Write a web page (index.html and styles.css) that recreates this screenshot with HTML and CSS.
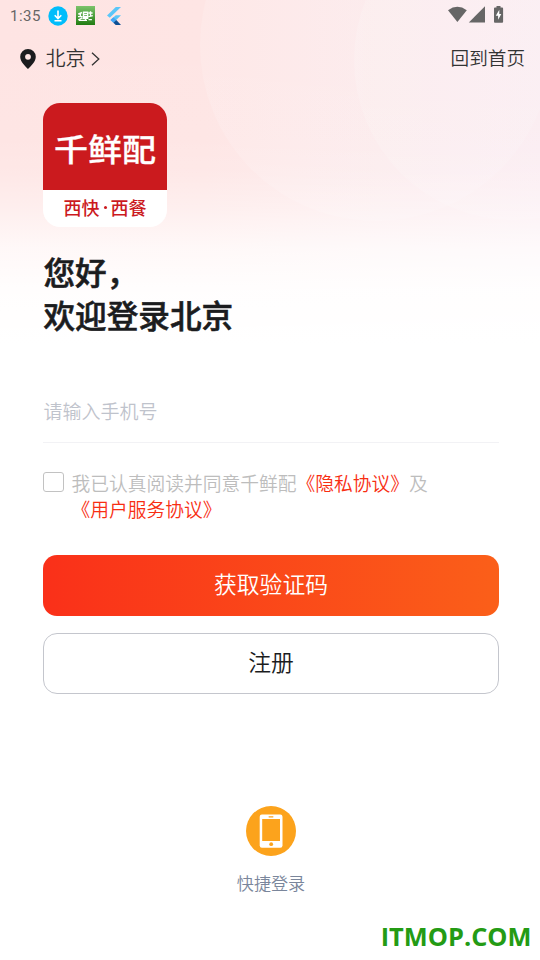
FILE: index.html
```html
<!DOCTYPE html>
<html lang="zh-CN">
<head>
<meta charset="utf-8">
<title>登录</title>
<link rel="stylesheet" href="styles.css">
</head>
<body>
<div class="screen">
  <svg class="backdrop" viewBox="0 0 540 345" aria-hidden="true">
    <defs>
      <linearGradient id="base" x1="0" x2="1" y1="0" y2="0">
        <stop offset="0" stop-color="#fee4e3"/><stop offset=".38" stop-color="#fee5e4"/><stop offset=".7" stop-color="#fce9eb"/><stop offset="1" stop-color="#fbebf0"/>
      </linearGradient>
      <linearGradient id="glow" x1="0" x2="1" y1="0" y2="0">
        <stop offset="0" stop-color="#fff" stop-opacity=".14"/><stop offset="1" stop-color="#fff" stop-opacity=".1"/>
      </linearGradient>
      <linearGradient id="fade" x1="0" x2="0" y1="0" y2="1">
        <stop offset="0" stop-color="#fff" stop-opacity="0"/><stop offset=".4" stop-color="#fff" stop-opacity=".04"/><stop offset=".5" stop-color="#fff" stop-opacity=".14"/><stop offset=".6" stop-color="#fff" stop-opacity=".38"/><stop offset=".72" stop-color="#fff" stop-opacity=".75"/><stop offset=".84" stop-color="#fff" stop-opacity=".94"/><stop offset="1" stop-color="#fff"/>
      </linearGradient>
    </defs>
    <rect width="540" height="345" fill="url(#base)"/>
    <circle cx="376" cy="45" r="176" fill="url(#glow)"/>
    <circle cx="514" cy="60" r="160" fill="url(#glow)"/>
    <rect width="540" height="345" fill="url(#fade)"/>
  </svg>

  <header class="status">
    <span class="clock">1:35</span>
    <svg class="st-down" viewBox="0 0 20 20"><circle cx="10" cy="10" r="9.7" fill="#00bdfb"/><path d="M10 4.5v7.5M6.7 9.2l3.3 3.3 3.3-3.3M6.5 14.8h7" fill="none" stroke="#fff" stroke-width="1.6"/></svg>
    <svg class="st-app" viewBox="0 0 19 19"><defs><linearGradient id="g" x2="0" y2="1"><stop stop-color="#7cc36b"/><stop offset="1" stop-color="#217c12"/></linearGradient></defs><rect width="19" height="19" fill="url(#g)"/><path d="M2.2 8.2l3.8-1.7M4.4 6.5v4.5M2 10.6h4.5M2.2 14l4-2.2M7.5 6.2h4.2v4.6H7.5zM7.5 8.5h4.2M6.6 12.3h5.8M9.5 11v3M12.6 7h4M14.5 5.3v5M12.6 10.6l4.2-1M12.5 13.6h3.4M3 14.4h8" fill="none" stroke="#fff" stroke-width="1.4"/></svg>
    <svg class="st-flutter" viewBox="0 0 14 18"><path d="M8.8 0H14L2.8 10.8 0 8.6z" fill="#5bc6f8"/><path d="M8.8 8.2H14L9.2 13l-2.8 2.8L3.5 13z" fill="#5bc6f8"/><path d="M3.5 13l2.8-2.7 3 2.7-2.9 2.8z" fill="#42a5f5"/><path d="M6.4 15.8L9.3 13l4.7 5H8.7z" fill="#0d4f94"/></svg>
    <svg class="st-right" viewBox="0 0 58 18"><g fill="#666"><path d="M0 4.2Q9.4-2.6 18.8 4.2L9.4 16z"/><path d="M20.8 16.4L37 .2v16.2z"/><path d="M46 2.4q0-.9.9-.9h1.6V0h4v1.5h1.7q.9 0 .9.9v13.4q0 .9-.9.9h-7.3q-.9 0-.9-.9z"/></g><path d="M51.3 3.8l-3.5 6h2.3v4l3.2-5.7h-2z" fill="#fff"/></svg>
  </header>

  <nav class="nav">
    <div class="place">
      <svg class="pin" viewBox="0 0 16 20"><path fill-rule="evenodd" d="M8 0a7.8 7.8 0 0 0-7.8 7.8C.2 12.8 5.5 17.5 8 20c2.5-2.5 7.8-7.2 7.8-12.2A7.8 7.8 0 0 0 8 0zm0 4.9a2.9 2.9 0 1 1 0 5.8 2.9 2.9 0 0 1 0-5.8z" fill="#1b1c1e"/></svg>
      <span>北京</span>
      <svg class="chev" viewBox="0 0 9 14"><path d="M1 .8L7.8 7 1 13.2" fill="none" stroke="#333" stroke-width="1.3"/></svg>
    </div>
    <span class="home">回到首页</span>
  </nav>

  <main class="content">
    <div class="logo">
      <div class="logo-main"><span>千鲜配</span></div>
      <div class="logo-sub"><span>西快</span><i></i><span>西餐</span></div>
    </div>
    <h1 class="hello">您好，<br>欢迎登录北京</h1>
    <div class="phone">请输入手机号</div>
    <div class="terms">
      <span class="box"></span>
      <p>我已认真阅读并同意千鲜配<a>《隐私协议》</a>及<br><a>《用户服务协议》</a></p>
    </div>
    <div class="btn primary">获取验证码</div>
    <div class="btn outline">注册</div>
  </main>

  <section class="quick">
    <svg viewBox="0 0 50 50"><circle cx="25" cy="25" r="25" fill="#fca31c"/><rect x="13.7" y="8.5" width="22.8" height="33.3" rx="2.2" fill="#fff"/><rect x="16.2" y="13" width="17.8" height="22" fill="#fca31c"/><rect x="22.5" y="10.2" width="5" height="1.2" rx=".6" fill="#fca31c"/><circle cx="25.2" cy="38.2" r="1.9" fill="#fca31c"/></svg>
    <span>快捷登录</span>
  </section>
  <div class="site">ITMOP.COM</div>
</div>
</body>
</html>
```
FILE: styles.css
```css
* { box-sizing: border-box; }
body {
  margin: 0;
  background: #fff;
  font-family: "Noto Sans CJK SC", sans-serif;
  font-weight: 350;
}
.screen {
  position: relative;
  width: 540px;
  height: 960px;
  overflow: hidden;
  display: flex;
  flex-direction: column;
}
.screen svg { display: block; flex: none; }
.backdrop { position: absolute; top: 0; left: 0; width: 540px; height: 345px; z-index: -1; }

.status { height: 32px; display: flex; align-items: center; padding: 0 34px 0 10px; }
.clock { width: 38px; font: 400 15px/20px Roboto, sans-serif; letter-spacing: .5px; color: #666; }
.st-down { width: 20px; height: 20px; margin-top: -1px; }
.st-app { width: 19px; height: 19px; margin: -1px 0 0 8px; }
.st-flutter { width: 14px; height: 18px; margin: -1px 0 0 12px; }
.st-right { width: 58px; height: 18px; margin: -2px 0 0 auto; }

.nav {
  height: 52px;
  padding: 0 15px 0 20px;
  display: flex;
  justify-content: space-between;
  align-items: center;
  color: #333;
  line-height: 30px;
}
.place { display: flex; align-items: center; font-size: 20px; }
.pin { width: 16px; height: 20px; margin: 2px 9.5px 0 0; }
.chev { width: 9px; height: 14px; margin: 1px 0 0 5.5px; }
.home { margin-bottom: 3px; font-size: 18.6px; }

.content { padding: 19px 41px 0 43px; }
.logo {
  width: 124px;
  height: 124px;
  border-radius: 17px;
  overflow: hidden;
  background: #fff;
  text-align: center;
}
.logo-main {
  height: 87px;
  padding-top: 23px;
  background: #cb1a1e;
  color: #fff;
  font-size: 34px;
  font-weight: 500;
  line-height: 43px;
  -webkit-text-stroke: .3px #fff;
}
.logo-main span { display: inline-block; transform: scaleY(.9); }
.logo-sub {
  display: flex;
  justify-content: center;
  align-items: center;
  gap: 4px;
  height: 35px;
  color: #cb1a1e;
  font-size: 18px;
  font-weight: 500;
  line-height: 35px;
}
.logo-sub i { width: 3px; height: 3px; border-radius: 50%; background: #cb1a1e; }

.hello {
  margin: 23px 0 0 .5px;
  font-size: 31.6px;
  line-height: 43px;
  font-weight: 500;
  color: #1b1c1e;
  -webkit-text-stroke: .6px #1b1c1e;
}
.phone {
  height: 61px;
  margin-top: 46px;
  padding-left: .5px;
  border-bottom: 1px solid #f2f2f5;
  font-size: 19px;
  line-height: 58px;
  color: #bfc3cc;
}
.terms { display: flex; margin-top: 27px; }
.box { width: 21px; height: 20px; margin: 2px 7.5px 0 0; border: 1px solid #c2c2c2; border-radius: 3px; }
.terms p { margin: 0; font-size: 18.75px; line-height: 26px; white-space: nowrap; color: #bdbdbd; }
.terms a { color: #f82e12; }

.btn {
  height: 61px;
  border-radius: 14px;
  font-size: 22.8px;
  line-height: 58px;
  text-align: center;
}
.primary { margin-top: 33px; color: #fff; background: linear-gradient(90deg, #fa3019, #fb5f19); }
.outline { margin-top: 17px; border: 1px solid #c4c6cd; color: #1b1c1e; background: #fff; line-height: 56px; }

.quick {
  margin-top: 112px;
  padding-left: 2px;
  display: flex;
  flex-direction: column;
  align-items: center;
  font-size: 17.1px;
  line-height: 26px;
  color: #7a869b;
}
.quick svg { width: 50px; height: 50px; margin-bottom: 14px; }
.site {
  margin-top: 22px;
  padding-right: 8.5px;
  text-align: right;
  color: #249b14;
  font: 700 25.4px/36px "Open Sans", sans-serif;
}
```
